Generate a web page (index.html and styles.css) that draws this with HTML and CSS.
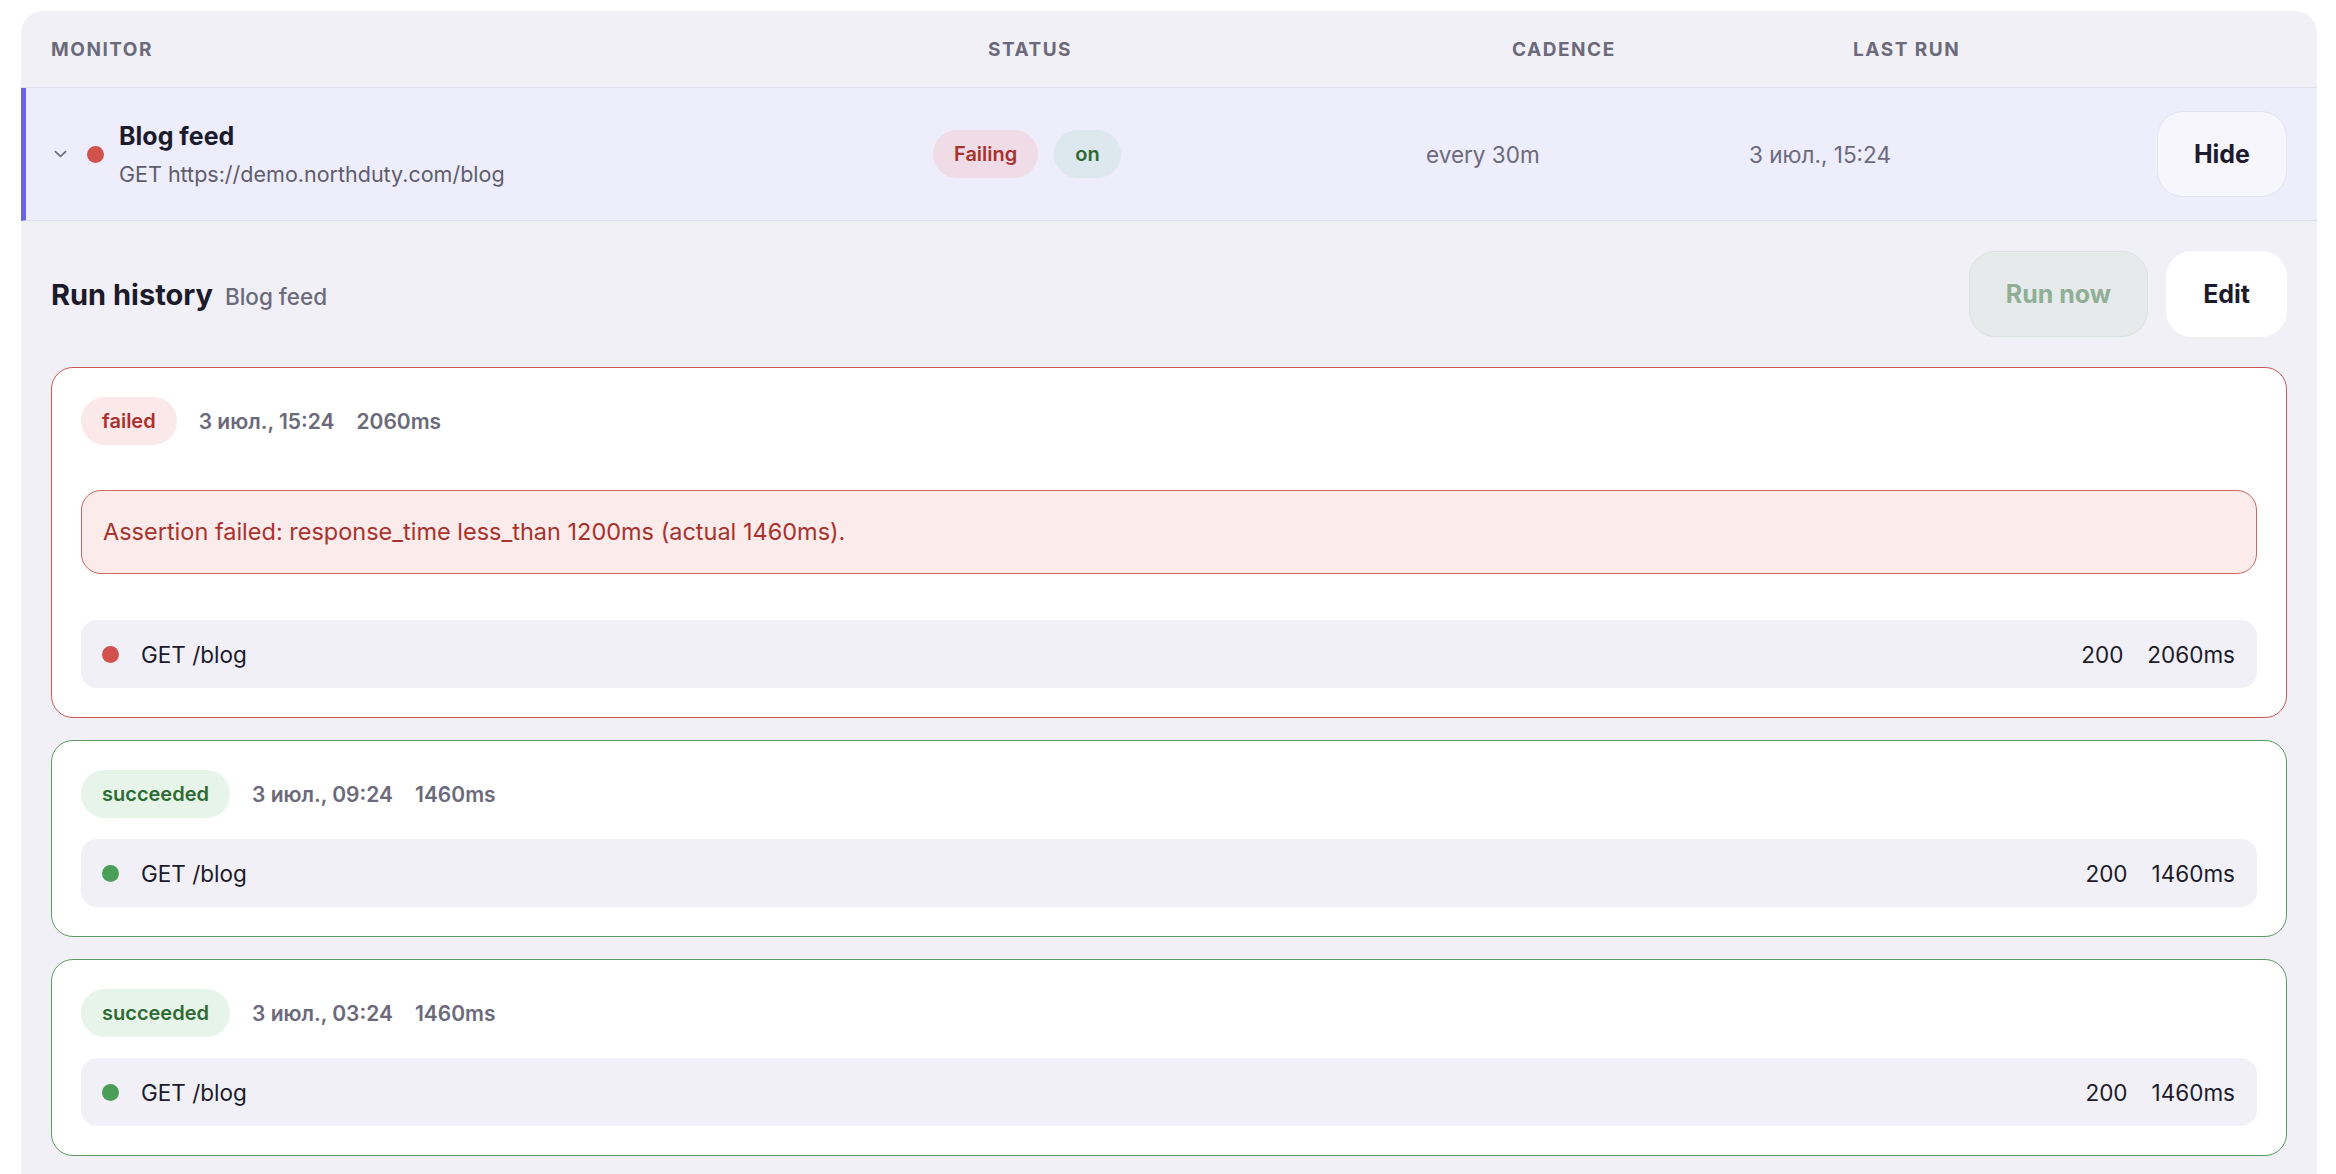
FILE: index.html
```html
<!doctype html>
<html lang="en">

<head>
  <meta charset="UTF-8">
  <title>Monitors</title>
  <link rel="stylesheet" href="styles.css">
</head>

<body>
  <main class="panel">
    <header class="table-head">
      <span>Monitor</span>
      <span>Status</span>
      <span>Cadence</span>
      <span>Last run</span>
    </header>

    <section class="monitor-row open">
      <div class="monitor-name">
        <svg class="chevron" viewBox="0 0 14 8"><path d="M1.5,1.5 L7,6.5 L12.5,1.5" fill="none" stroke="#6b6a7a" stroke-width="1.8" stroke-linecap="round" stroke-linejoin="round"/></svg>
        <span class="dot dot-red"></span>
        <div class="name-text">
          <h1>Blog feed</h1>
          <p>GET https://demo.northduty.com/blog</p>
        </div>
      </div>
      <div class="status-cell">
        <span class="pill pill-failing">Failing</span>
        <span class="pill pill-on">on</span>
      </div>
      <div class="muted-cell">every 30m</div>
      <div class="muted-cell">3 июл., 15:24</div>
      <div class="row-actions">
        <button class="btn btn-hide">Hide</button>
      </div>
    </section>

    <section class="history">
      <header class="history-head">
        <h2>Run history <span>Blog feed</span></h2>
        <div class="history-actions">
          <button class="btn btn-run" disabled>Run now</button>
          <button class="btn btn-edit">Edit</button>
        </div>
      </header>

      <ol class="runs">
        <li class="run run-failed">
          <div class="run-meta">
            <span class="pill pill-failed">failed</span>
            <span>3 июл., 15:24</span>
            <span>2060ms</span>
          </div>
          <p class="assertion">Assertion failed: response_time less_than 1200ms (actual 1460ms).</p>
          <div class="step">
            <span class="dot dot-red"></span>
            <span class="step-name">GET /blog</span>
            <span class="step-code">200</span>
            <span>2060ms</span>
          </div>
        </li>

        <li class="run run-ok">
          <div class="run-meta">
            <span class="pill pill-ok">succeeded</span>
            <span>3 июл., 09:24</span>
            <span>1460ms</span>
          </div>
          <div class="step">
            <span class="dot dot-green"></span>
            <span class="step-name">GET /blog</span>
            <span class="step-code">200</span>
            <span>1460ms</span>
          </div>
        </li>

        <li class="run run-ok">
          <div class="run-meta">
            <span class="pill pill-ok">succeeded</span>
            <span>3 июл., 03:24</span>
            <span>1460ms</span>
          </div>
          <div class="step">
            <span class="dot dot-green"></span>
            <span class="step-name">GET /blog</span>
            <span class="step-code">200</span>
            <span>1460ms</span>
          </div>
        </li>
      </ol>
    </section>
  </main>
</body>
</html>
```

FILE: styles.css
```css
* {
  box-sizing: border-box;
  margin: 0;
  padding: 0;
}

body {
  font-family: Inter, "Noto Sans", sans-serif;
  background-color: white;
  color: #1c1b2b;
  padding: 11px 19px 0 21px;
}

.panel {
  background-color: #f1f0f6;
  border-radius: 22px 22px 0 0;
  overflow: hidden;
}

/* table header */
.table-head {
  display: grid;
  grid-template-columns: 937px 524px 341px 1fr;
  align-items: center;
  height: 77px;
  padding-left: 30px;
  border-bottom: 1px solid #e1e0ec;
  font-size: 19px;
  font-weight: 700;
  letter-spacing: 0.08em;
  text-transform: uppercase;
  color: #6b6a7a;
}

/* monitor row */
.monitor-row {
  display: grid;
  grid-template-columns: 879px 493px 323px 1fr auto;
  align-items: center;
  padding: 23px 30px 23px 28px;
  background-color: #eeedfb;
  border-left: 5px solid #6b62e4;
  border-bottom: 1px solid #dddcec;
}

.monitor-name {
  display: flex;
  align-items: center;
}

.chevron {
  width: 13px;
  height: 8px;
  margin-right: 20px;
}

.dot {
  display: inline-block;
  width: 17px;
  height: 17px;
  border-radius: 50%;
  flex-shrink: 0;
}

  .dot-red {
    background-color: #d1524c;
  }

  .dot-green {
    background-color: #4b9e57;
  }

.name-text {
  margin-left: 15px;
}

  .name-text h1 {
    font-size: 25px;
    font-weight: 700;
    line-height: 32px;
  }

  .name-text p {
    font-size: 21.5px;
    line-height: 28px;
    margin-top: 8px;
    color: #5e5d6d;
  }

.status-cell {
  display: flex;
  gap: 16px;
}

.muted-cell {
  font-size: 22.5px;
  color: #6b6a7a;
}

.pill {
  display: inline-block;
  height: 48px;
  line-height: 48px;
  padding: 0 21px;
  border-radius: 24px;
  font-size: 20px;
  font-weight: 600;
}

  .pill-failing {
    background-color: #f0dce6;
    color: #a8322e;
  }

  .pill-on {
    background-color: #dce7ee;
    color: #2e6b34;
  }

  .pill-failed {
    background-color: #fbe8e8;
    color: #a8322e;
  }

  .pill-ok {
    background-color: #e6f4ea;
    color: #2e6b34;
  }

/* buttons */
.btn {
  font-family: inherit;
  font-size: 25px;
  font-weight: 700;
  height: 86px;
  padding: 0 36px;
  border-radius: 26px;
  border: 1px solid transparent;
  cursor: pointer;
}

  .btn-hide {
    background-color: #f7f6fc;
    border-color: #e5e4f1;
    color: #1c1b2b;
  }

  .btn-run {
    background-color: #e6eaeb;
    border-color: #d9e2df;
    color: #8fae95;
    cursor: default;
  }

  .btn-edit {
    background-color: white;
    color: #1c1b2b;
  }

/* run history */
.history {
  padding: 30px 30px 40px 30px;
}

.history-head {
  display: flex;
  align-items: center;
  justify-content: space-between;
}

  .history-head h2 {
    font-size: 29px;
    font-weight: 700;
  }

  .history-head h2 span {
    font-size: 22.5px;
    font-weight: 500;
    color: #6b6a7a;
    margin-left: 5px;
  }

.history-actions {
  display: flex;
  gap: 18px;
}

.runs {
  list-style: none;
  display: flex;
  flex-direction: column;
  gap: 22px;
  margin-top: 30px;
}

.run {
  display: flex;
  flex-direction: column;
  gap: 21px;
  padding: 29px;
  background-color: white;
  border: 1px solid;
  border-radius: 22px;
}

  .run-failed {
    border-color: #c95a58;
  }

  .run-ok {
    border-color: #5c9a62;
  }

.run-meta {
  display: flex;
  align-items: center;
  gap: 22px;
  font-size: 21px;
  font-weight: 600;
  color: #6b6a7a;
}

.assertion {
  margin: 24px 0 25px;
  padding: 28px 21px;
  line-height: 26px;
  font-size: 23.5px;
  color: #a8322e;
  background-color: #fbebeb;
  border: 1px solid #cc6461;
  border-radius: 20px;
}

.step {
  display: flex;
  align-items: center;
  gap: 22px;
  height: 68px;
  padding: 0 22px 0 21px;
  background-color: #f1f0f6;
  border-radius: 16px;
  font-size: 22.5px;
  color: #1c1b2b;
}

  .step-name {
    flex: 1;
  }

  .step-code {
    margin-right: 2px;
  }
```
